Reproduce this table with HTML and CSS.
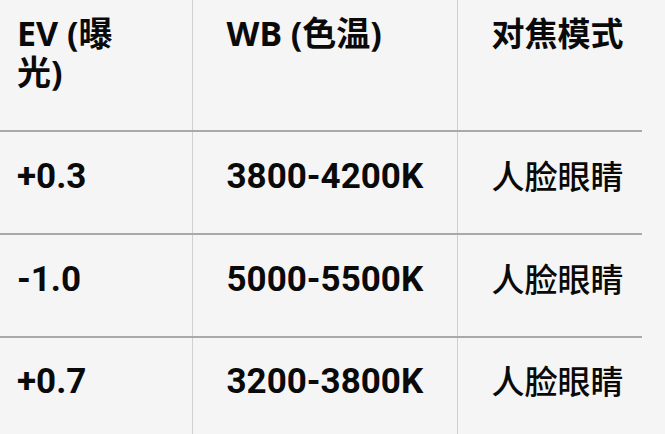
FILE: index.html
```html
<!DOCTYPE html>
<html lang="zh-CN">
<head>
<meta charset="utf-8">
<link rel="stylesheet" href="styles.css">
</head>
<body>
<table class="grid">
  <colgroup>
    <col class="c1"><col class="c2"><col class="c3">
  </colgroup>
  <thead>
    <tr>
      <th class="first">EV (曝光)</th>
      <th>WB (色温)</th>
      <th>对焦模式</th>
    </tr>
  </thead>
  <tbody>
    <tr>
      <td class="first num">+0.3</td>
      <td class="num">3800-4200K</td>
      <td class="cjk">人脸眼睛</td>
    </tr>
    <tr>
      <td class="first num">-1.0</td>
      <td class="num">5000-5500K</td>
      <td class="cjk">人脸眼睛</td>
    </tr>
    <tr class="last">
      <td class="first num">+0.7</td>
      <td class="num">3200-3800K</td>
      <td class="cjk">人脸眼睛</td>
    </tr>
  </tbody>
</table>
</body>
</html>
```

FILE: styles.css
```css
html, body {
  margin: 0;
  padding: 0;
  background: #f5f5f5;
  overflow: hidden;
}
body {
  color: #0a0a0a;
  font-family: Roboto, "Noto Sans CJK SC", sans-serif;
}
.grid {
  border-collapse: collapse;
  table-layout: fixed;
  width: 642px;
}
.c1 { width: 192px; }
.c2 { width: 265px; }
.c3 { width: 185px; }
.grid th, .grid td {
  border-left: 1px solid #cfcfcf;
  padding: 0 17px 0 34px;
  text-align: left;
}
.grid th.first, .grid td.first {
  border-left: none;
  padding-left: 17px;
}
.grid th.first {
  padding-right: 60px;
}
.grid th {
  height: 131px;
  vertical-align: top;
  padding-top: 14px;
  font-size: 34px;
  line-height: 39px;
  font-weight: 700;
  font-family: "Noto Sans", "Noto Sans CJK SC", sans-serif;
  border-bottom: 2px solid #a9a9a9;
  box-sizing: border-box;
}
.grid th:last-child {
  font-size: 33px;
}
.grid td {
  height: 103px;
  box-sizing: border-box;
  vertical-align: middle;
  padding-bottom: 12px;
  font-size: 35px;
  line-height: 40px;
  border-bottom: 2px solid #a9a9a9;
}
.grid td.num {
  font-weight: 700;
}
.grid td.cjk {
  font-family: "Noto Sans CJK SC", sans-serif;
  font-weight: 500;
  font-size: 33px;
  padding-bottom: 16px;
}
.grid tr.last td {
  border-bottom: 4px solid #9a9a9a;
}
```
